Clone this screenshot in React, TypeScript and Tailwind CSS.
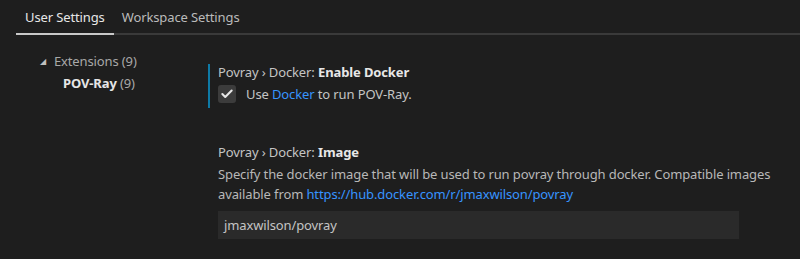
import { Check } from "lucide-react";

function Tabs() {
  return (
    <div className="flex h-[35px] items-end pl-4">
      <div className="border-b-2 border-[#c8c8c8] px-[9px] pb-[6px] text-[#e7e7e7]">User Settings</div>
      <div className="flex-1 border-b-2 border-[#3a3a3a] pb-[6px] pl-[8px] text-[#bbbbbb]">Workspace Settings</div>
    </div>
  );
}

function Tree() {
  return (
    <div className="w-[208px] shrink-0 pt-[16px] pl-[40px]">
      <div className="flex items-center gap-[8px] text-[#a8a8a8]">
        <span className="text-[8px] text-[#c0c0c0]">◢</span>
        <span>Extensions (9)</span>
      </div>
      <div className="mt-[2px] pl-[23px] text-[#d0d0d0]">
        <span className="font-bold text-[#e6e6e6]">POV-Ray</span> <span className="text-[#a8a8a8]">(9)</span>
      </div>
    </div>
  );
}

export default function App() {
  return (
    <div
      className="h-[259px] w-[800px] overflow-hidden bg-[#1e1e1e] text-[13px] leading-[20px] tracking-[-0.12px]"
      style={{ fontFamily: '"Noto Sans", "Open Sans", sans-serif' }}
    >
      <Tabs />
      <div className="flex">
        <Tree />
        <div className="flex-1 pt-[29px]">
          <div className="border-l-2 border-[#0e7aa6] pb-[4px] pl-[8px]">
            <div className="h-[16px] leading-[16px] text-[#c4c4c4]">
              Povray › Docker: <span className="font-bold text-[#e7e7e7]">Enable Docker</span>
            </div>
            <div className="mt-[4px] flex items-center gap-[10px]">
              <div className="flex h-[18px] w-[18px] items-center justify-center rounded-[3px] bg-[#3c3c3c]">
                <Check size={14} strokeWidth={3.5} className="text-[#e8e8e8]" />
              </div>
              <div className="text-[#c4c4c4]">
                Use <span className="text-[#3794ff]">Docker</span> to run POV-Ray.
              </div>
            </div>
          </div>
          <div className="mt-[34px] pl-[10px]">
            <div className="text-[#c4c4c4]">
              Povray › Docker: <span className="font-bold text-[#e7e7e7]">Image</span>
            </div>
            <div className="mt-[2px] pr-[16px] text-[#b8b8b8]">
              Specify the docker image that will be used to run povray through docker. Compatible images available from{" "}
              <span className="text-[#3794ff]">https://hub.docker.com/r/jmaxwilson/povray</span>
            </div>
            <div className="mt-[7px] flex h-[28px] w-[521px] items-center bg-[#2a2a2a] px-[6px] text-[#c4c4c4]">
              jmaxwilson/povray
            </div>
          </div>
        </div>
      </div>
    </div>
  );
}
